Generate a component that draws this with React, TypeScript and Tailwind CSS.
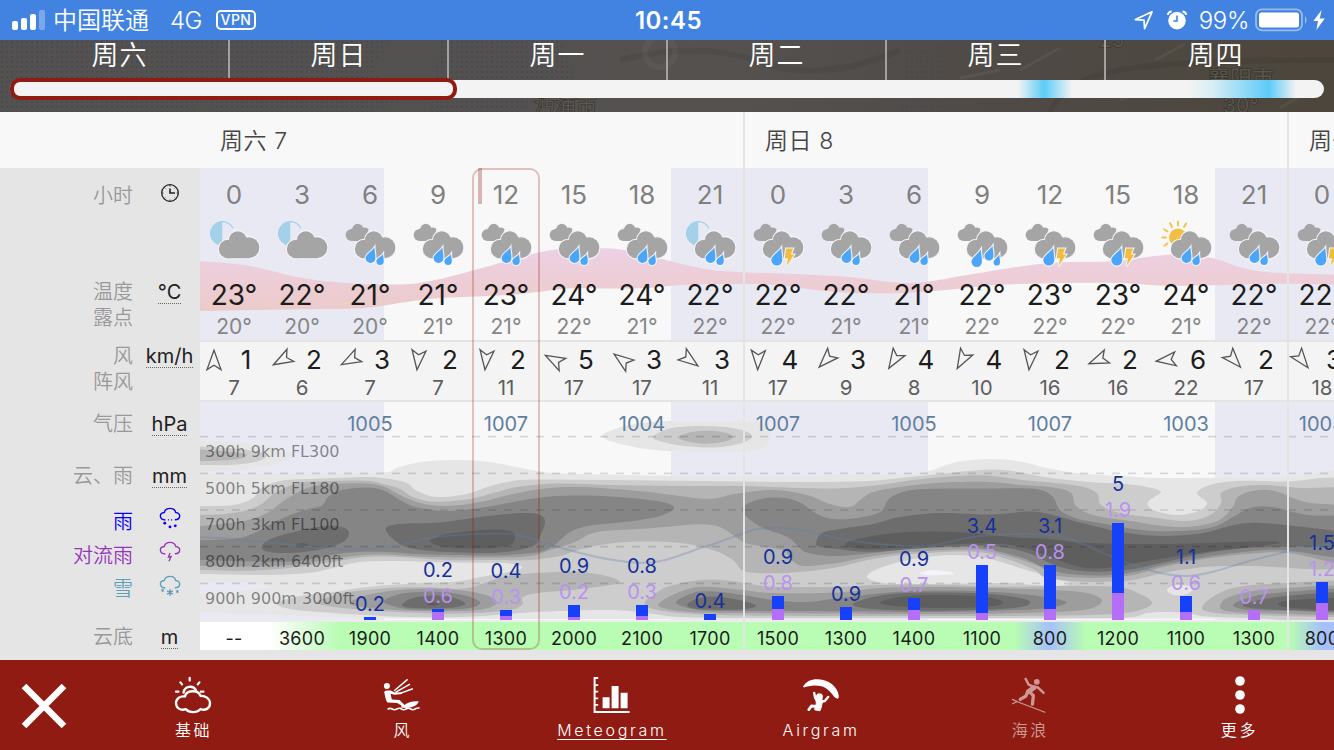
import React from "react";

type Pt = [number, number];

/* ---------- geometry helpers ---------- */

function parse(s: string): Pt[] {
  return s
    .trim()
    .split(/\s+/)
    .map((p) => p.split(",").map(Number) as Pt);
}

function segment(p0: Pt, p1: Pt, p2: Pt, p3: Pt): string {
  const c1x = p1[0] + (p2[0] - p0[0]) / 6;
  const c1y = p1[1] + (p2[1] - p0[1]) / 6;
  const c2x = p2[0] - (p3[0] - p1[0]) / 6;
  const c2y = p2[1] - (p3[1] - p1[1]) / 6;
  return `C${c1x.toFixed(1)},${c1y.toFixed(1)} ${c2x.toFixed(1)},${c2y.toFixed(1)} ${p2[0]},${p2[1]}`;
}

function openPath(s: string, move = true): string {
  const p = parse(s);
  let d = `${move ? "M" : "L"}${p[0][0]},${p[0][1]}`;
  for (let i = 0; i < p.length - 1; i++) {
    d += segment(p[Math.max(i - 1, 0)], p[i], p[i + 1], p[Math.min(i + 2, p.length - 1)]);
  }
  return d;
}

function closedPath(s: string): string {
  const p = parse(s);
  const n = p.length;
  let d = `M${p[0][0]},${p[0][1]}`;
  for (let i = 0; i < n; i++) {
    d += segment(p[(i - 1 + n) % n], p[i], p[(i + 1) % n], p[(i + 2) % n]);
  }
  return d + "Z";
}

/* ---------- forecast data ---------- */

type Sky = "moon" | "rain" | "moonRain" | "storm" | "heavy" | "sunRain";

interface Hour {
  h: number;
  sky: Sky;
  t: number;
  dew: number;
  dir: number;
  wind: number;
  gust: number;
  hpa?: number;
  rain?: string;
  conv?: string;
  rainPx: number;
  convPx: number;
  base: string;
}

const HOURS: Hour[] = [
  { h: 0, sky: "moon", t: 23, dew: 20, dir: 0, wind: 1, gust: 7, rainPx: 0, convPx: 0, base: "--" },
  { h: 3, sky: "moon", t: 22, dew: 20, dir: 241, wind: 2, gust: 6, rainPx: 0, convPx: 0, base: "3600" },
  { h: 6, sky: "rain", t: 21, dew: 20, dir: 242, wind: 3, gust: 7, hpa: 1005, rain: "0.2", rainPx: 3, convPx: 0, base: "1900" },
  { h: 9, sky: "rain", t: 21, dew: 21, dir: 186, wind: 2, gust: 7, rain: "0.2", conv: "0.6", rainPx: 3, convPx: 8, base: "1400" },
  { h: 12, sky: "rain", t: 23, dew: 21, dir: 186, wind: 2, gust: 11, hpa: 1007, rain: "0.4", conv: "0.3", rainPx: 6, convPx: 4, base: "1300" },
  { h: 15, sky: "rain", t: 24, dew: 22, dir: 298, wind: 5, gust: 17, rain: "0.9", conv: "0.2", rainPx: 12, convPx: 3, base: "2000" },
  { h: 18, sky: "rain", t: 24, dew: 21, dir: 306, wind: 3, gust: 17, hpa: 1004, rain: "0.8", conv: "0.3", rainPx: 11, convPx: 4, base: "2100" },
  { h: 21, sky: "moonRain", t: 22, dew: 22, dir: 126, wind: 3, gust: 11, rain: "0.4", rainPx: 6, convPx: 0, base: "1700" },
  { h: 0, sky: "storm", t: 22, dew: 22, dir: 182, wind: 4, gust: 17, hpa: 1007, rain: "0.9", conv: "0.8", rainPx: 13, convPx: 11, base: "1500" },
  { h: 3, sky: "rain", t: 22, dew: 21, dir: 224, wind: 3, gust: 9, rain: "0.9", rainPx: 13, convPx: 0, base: "1300" },
  { h: 6, sky: "rain", t: 21, dew: 21, dir: 212, wind: 4, gust: 8, hpa: 1005, rain: "0.9", conv: "0.7", rainPx: 12, convPx: 10, base: "1400" },
  { h: 9, sky: "heavy", t: 22, dew: 22, dir: 209, wind: 4, gust: 10, rain: "3.4", conv: "0.5", rainPx: 48, convPx: 7, base: "1100" },
  { h: 12, sky: "storm", t: 23, dew: 22, dir: 186, wind: 2, gust: 16, hpa: 1007, rain: "3.1", conv: "0.8", rainPx: 44, convPx: 11, base: "800" },
  { h: 15, sky: "storm", t: 23, dew: 22, dir: 248, wind: 2, gust: 16, rain: "5", conv: "1.9", rainPx: 70, convPx: 27, base: "1200" },
  { h: 18, sky: "sunRain", t: 24, dew: 21, dir: 263, wind: 6, gust: 22, hpa: 1003, rain: "1.1", conv: "0.6", rainPx: 16, convPx: 8, base: "1100" },
  { h: 21, sky: "rain", t: 22, dew: 22, dir: 138, wind: 2, gust: 17, conv: "0.7", rainPx: 0, convPx: 10, base: "1300" },
  { h: 0, sky: "storm", t: 22, dew: 22, dir: 142, wind: 3, gust: 18, hpa: 1004, rain: "1.5", conv: "1.2", rainPx: 21, convPx: 17, base: "800" },
];

const TEMP_TOP =
  "200,261 247,265.5 300,277.5 347,283 400,284.5 433,280.5 473,270.5 507,261 540,252.3 570,248 607,248.3 633,251.7 670,261 707,269.3 743,272.3 778,273.3 846,276.7 891,282 922,282.3 967,275 1024,266 1062,262.3 1111,261.3 1157,255.7 1183,254.3 1213,258.3 1244,268.3 1270,272.3 1334,274.7";
const TEMP_BOTTOM =
  "1334,284.7 1270,283.7 1213,285.3 1164,285.7 1119,283 1062,283 998,285 937,290.7 899,293 854,293 816,290 785,285.7 743,284 683,285 640,288.3 573,288.3 540,291.7 507,295 437,298.3 400,303 360,308.3 300,309.3 200,311";

const PRESSURE =
  "196,537 233,539 283,544 333,548.7 367,549 400,545.3 430,537.5 480,534 513,534.3 540,541 567,549.5 607,559 643,562.7 667,559.5 693,550.7 720,541.7 743,533.5 757,529 780,528 807,531 840,538.5 880,544.3 927,545.7 973,537 1007,534.3 1040,534.3 1063,537 1087,546 1120,560 1160,573 1187,576 1213,571.7 1247,561.7 1287,551.7 1310,547 1340,543";

/* Cloud cover contours, lightest first; each shape is drawn over the former. */
const CLOUDS: { fill: string; shapes: string[] }[] = [
  {
    fill: "#e6e6e6",
    shapes: [
      "180,474 200,474 300,474 380,473 397,468 420,462 453,460 490,462 540,471.5 580,474 670,475.7 743,476.3 857,475 907,474 930,470.7 957,462 990,459 1020,461.5 1047,468 1077,473 1120,476 1160,478 1207,477.7 1287,476.5 1350,476 1360,550 1350,618.5 1200,618.5 1000,619 700,619 500,619 400,618.5 330,617 260,614 200,612 180,611 180,597 200,594 240,591 270,587 250,583 200,581 180,581 150,520",
      "170,441 200,440.5 240,443 275,448 292,455 275,464 240,470 200,471 170,471",
      "602,436.7 615,429 640,423 670,421 710,421.3 750,421 765,425 770,437 765,447 750,451.5 710,452 660,450.5 625,445",
    ],
  },
  {
    fill: "#cdcdcd",
    shapes: [
      "180,506 200,506 233,505 253,498 263,487 283,480.5 317,478.7 367,477 390,479 407,483 417,491 437,497 467,494 487,487 507,482 533,479.5 613,480 743,481.5 807,482 867,481 900,478 940,474 973,470.5 995,469.5 1017,471.7 1047,477.5 1087,481.7 1125,484 1147,487 1161,492 1148,501.7 1153,510 1177,515 1198,511 1207,503 1197,493 1210,485 1237,481 1287,481.5 1350,483 1360,550 1350,617.5 1253,618 1207,616.5 1187,613 1165,612 1147,613 1120,618 1000,618 743,618 680,617 647,613 613,610 560,611 520,613 463,617 400,616.7 333,613 290,609 277,603 300,596 333,592 367,587 413,583.5 457,581.5 480,577 513,571 522,567 510,563.5 493,562.7 447,562.5 400,561 360,562 333,568 310,572.7 267,575 200,574 180,574 150,540",
      "170,446.5 205,446.7 240,449 262,453 266,457 255,462 230,465 200,465 170,465",
      "653,437 668,429 695,426 725,427 745,431 752,437 740,443.5 715,447.5 685,446 663,442",
    ],
  },
  {
    fill: "#e6e6e6",
    shapes: [
      "867,577 880,568 913,559 953,555 990,559 1023,569 1045,575.5 1060,580 1072,583 1057,586 1035,585 1007,583 973,583.5 913,584 883,583",
      "1167,590 1174,585.5 1187,585.5 1193,589 1186,594.5 1174,595",
    ],
  },
  { fill: "#f3f3f8", shapes: ["920,573 932,570 948,571.5 954,574 940,575 926,575"] },
  {
    fill: "#b5b5b5",
    shapes: [
      "180,515 200,515 233,513 258,506 277,491.7 300,483 330,481 367,480.7 385,484.5 400,489 413,497 433,501.7 467,499.5 493,493 520,486.5 560,483.5 613,485 680,486 743,486 800,488 840,488.3 880,485 913,480 957,476 990,475.7 1023,480 1053,482.7 1082,486.5 1097,493 1101,505 1120,513 1153,517.5 1187,521 1210,515 1221,503 1221,493 1237,487 1265,485 1300,488 1350,491 1360,530 1350,567 1253,566 1207,566.7 1163,573 1130,580.5 1087,581.7 1047,578 1035,570 1007,559 973,551.7 913,554 873,559 833,568 790,572.7 757,573 742,570 733,560 713,550 680,543 633,541.7 600,545 575,551 560,556 530,560 493,560 447,560 400,557 367,557 333,561.7 300,566.7 250,570.7 200,570 180,570 150,540",
      "170,450 205,450 232,452 247,455 235,459.5 205,461 170,461",
      "678,437 692,432 710,430.7 727,433 733,437 725,441.5 705,443.7 688,441.5",
      "317,602 343,593 377,589 400,587.5 430,587.5 465,588.5 490,581 507,576 540,572.7 580,572 610,577 619,582.7 597,587 567,590.5 540,592.7 523,597 522,605 507,610.5 463,613.5 413,612.7 367,610 333,606.7",
      "645,602 655,594 667,587 693,581 720,580 743,582.7 773,586.7 840,586.7 880,585 940,585 1007,586.7 1070,586 1117,587 1138,593 1152,603 1133,611.7 1087,615 1000,616 900,616 740,615.5 680,613 650,608",
      "1202,608 1213,596.7 1237,587 1287,583 1350,582 1360,600 1350,616 1253,615 1215,613",
    ],
  },
  {
    fill: "#9d9d9d",
    shapes: [
      "180,526 200,526 243,521 267,513 285,500 307,488 335,484 367,483.5 385,487 400,495 420,503 447,506 480,502 513,494 545,488.5 580,487 613,489 647,491.7 680,496 710,499 735,494 773,490 807,495 830,504 850,507 860,500 873,492 900,487 940,482.7 990,482 1020,485 1053,487.5 1071,493 1076,506 1093,515 1130,521 1177,527 1215,522 1232,508 1238,496.7 1255,490.5 1275,491 1305,502 1350,509 1360,540 1350,564 1290,553 1253,553.5 1207,558.5 1163,567 1130,575.5 1093,578 1053,575 1040,566.7 1007,555.5 973,549.5 913,551.7 873,556 840,562.5 807,566 795,563 788,555 783,550 760,546 743,541.7 723,528.5 707,524.5 680,525.5 647,528.5 610,530.5 590,534 575,542 550,550 530,556 493,557.5 430,557 380,554.5 350,556.5 320,561 290,565 250,566.5 200,565.7 180,565 150,540",
      "350,604 360,597 380,592.5 405,589.5 440,589 473,592 493,598 495,605 473,610.5 413,610.7 370,608",
      "660,607 665,599 690,588.5 713,587 743,590 773,593 840,592.5 880,588 940,587 1007,588.5 1053,590 1087,593 1102,601 1083,610 1020,613 940,614 740,613 690,612",
      "1220,606.7 1227,598 1253,591 1287,588 1350,586 1360,600 1350,614 1253,613 1227,611",
    ],
  },
  {
    fill: "#858585",
    shapes: [
      "180,540 200,540 233,539 253,533.5 283,518 305,510 322,505.5 328,497 342,490 367,487.5 385,491 400,500 417,507.5 447,511 480,508 513,502 547,496.7 580,495.5 610,496.5 645,499.5 668,503.5 674,509 660,516 640,520 610,523.5 587,526 570,532 557,543 543,551 520,554 493,555.5 430,554.5 380,551.7 345,553 318,558 290,561.5 250,561.5 200,560 180,560 150,550",
      "742,508 757,500 777,497.5 798,501.5 817,514 833,519 857,518 880,512 888,500 900,493 923,489 990,488.5 1035,489 1052,496 1060,510 1075,518 1100,523 1153,531 1207,528.5 1233,517 1250,508 1273,507 1307,515 1350,518 1360,540 1350,558 1287,550.5 1253,551 1207,556.7 1163,565 1130,572.7 1093,575.5 1053,571 1020,557 973,547.5 913,548.5 873,553 833,556 807,552.5 797,545 787,536.7 763,528 747,517",
      "384,602 400,594 433,591.5 463,595 480,602 470,608 440,609.5 407,609",
      "676,603 693,593 713,591.5 743,595 773,600 807,602 835,598.5 865,595 895,592 940,590.5 990,591.7 1035,595.5 1066,601.7 1053,607 1020,610 940,612 840,611.3 740,611 700,610",
      "1233,605 1253,596.5 1287,592 1350,589 1360,600 1350,612 1290,611 1250,610",
    ],
  },
  {
    fill: "#6d6d6d",
    shapes: [
      "262,546 273,538 300,530.5 325,526 343,527.5 349,533 343,542 320,549.5 290,553 267,551.5",
      "386,528 400,524 440,522.5 480,517 513,513.5 537,514 545,520.7 541,534 533,546 500,552.5 447,552 410,548 393,539",
      "816,543 822,533 840,529 873,524 900,517 940,513 990,514.5 1030,511.5 1053,515 1080,522.5 1120,531.7 1160,536 1200,533.5 1227,526.7 1247,523 1275,524 1350,533 1360,540 1350,547 1287,546.7 1247,548 1207,553 1163,562.5 1130,569.5 1093,571.7 1060,567 1025,552 990,546 940,547 873,551.7 837,549 820,547",
      "402,605 413,598 437,595.5 457,599 465,604.5 447,608 413,608",
      "687,605 700,598 720,597 743,601 756,606 740,609.5 700,609.3",
      "853,605 873,597 907,593 973,593 1013,596.7 1030,602 1013,608 940,610.7 880,609.5",
      "1243,605 1260,600 1287,596 1350,592 1360,600 1350,611 1290,610 1255,608.5",
    ],
  },
  {
    fill: "#5e5e5e",
    shapes: [
      "295,545 302,543 309,545 302,547",
      "430,541 436,537.5 450,533.5 490,529.5 510,531 515,537.5 507,546 470,548.5 440,546",
      "845,544 855,539.5 890,533.5 927,531.5 973,533 1010,537 1047,539 1090,543 1153,544 1210,543 1253,541.5 1280,542.5 1253,546.7 1207,551.7 1153,560 1110,567.5 1080,567 1045,555 1015,545.5 973,543.5 923,546.7 873,549 850,547.5",
      "427,604 433,602.5 439,604 433,605.5",
      "880,602.7 900,597 940,595 987,597 1003,602.7 987,606.7 940,608 900,606.5",
      "1278,604 1293,600 1350,597.5 1360,603 1350,610 1293,608",
    ],
  },
];

/* ---------- icons ---------- */

const HALO = "#f4f4f8";

function Cloud() {
  const shape = (
    <>
      <circle cx="18.5" cy="28.5" r="9.2" />
      <circle cx="28.3" cy="19.5" r="8.8" />
      <circle cx="39.3" cy="27.2" r="10.5" />
      <rect x="18.5" y="22" width="21" height="15.7" />
    </>
  );
  return (
    <>
      <g fill={HALO} stroke={HALO} strokeWidth="2.2">
        {shape}
      </g>
      <g fill="#a5a5a5">{shape}</g>
    </>
  );
}

function Drop({ x, top, w, h }: { x: number; top: number; w: number; h: number }) {
  const r = w / 2;
  const cy = top + h - r;
  return (
    <path
      d={`M${x + r * 0.8},${top} C${x + r * 0.3},${top + h * 0.25} ${x - r},${cy - r * 0.8} ${x - r},${cy} A${r},${r} 0 0 0 ${x + r},${cy} C${x + r},${cy - r} ${x + r * 0.8},${top + 3} ${x + r * 0.8},${top}Z`}
      fill="#4ba6fa"
      stroke={HALO}
      strokeWidth="2.2"
      paintOrder="stroke"
    />
  );
}

function SkyIcon({ sky }: { sky: Sky }) {
  const moon = sky === "moon" || sky === "moonRain";
  const sun = sky === "sunRain";
  return (
    <svg width="50" height="50" viewBox="-0.5 -0.5 50 50" className="block overflow-visible">
      {moon && (
        <g>
          <path d="M12.8,.6 A12.3,12.3 0 0 0 12.8,25.2Z" fill="#a3d1ea" />
          <path d="M12.5,1.1 C17,.6 21.5,3.5 23.5,7.8" fill="none" stroke="#a3d1ea" strokeWidth="1.2" />
        </g>
      )}
      {sun && (
        <g>
          <circle cx="16.5" cy="17" r="9" fill="#f1bf42" />
          <g stroke="#f1c14a" strokeWidth="1.9" strokeLinecap="round">
            <path d="M16.5,5V1M10.5,6.5L8.5,2.6M6,11L2.5,8.8M4.3,17H.8M6,23L3,25.3M22.5,6.5L24.6,3" />
          </g>
        </g>
      )}
      {!moon && !sun && (
        <g fill="#a5a5a5">
          <circle cx="6.2" cy="14.5" r="6.1" />
          <circle cx="12.3" cy="8.9" r="5.6" />
          <path d="M6,8 L17,7.2 Q21,6.2 23,8.5 L20,20.6 L6,20.6Z" />
        </g>
      )}
      <Cloud />
      {(sky === "rain" || sky === "moonRain" || sky === "sunRain") && (
        <>
          <Drop x={25} top={27} w={9.8} h={15.4} />
          <Drop x={34.6} top={33.5} w={7.4} h={11} />
        </>
      )}
      {sky === "heavy" && (
        <>
          <Drop x={31.5} top={25.5} w={9} h={14.5} />
          <Drop x={19.2} top={29} w={10.4} h={17.4} />
          <Drop x={39.3} top={34} w={6.4} h={11} />
        </>
      )}
      {sky === "storm" && (
        <>
          <Drop x={23.3} top={27.5} w={11} h={17.6} />
          <path
            d="M32.6,28 H39.6 L37.3,34 H40.6 L33,45.8 L34.6,37.8 H31.3Z"
            fill="#f3bc3c"
            stroke={HALO}
            strokeWidth="2.2"
            paintOrder="stroke"
          />
        </>
      )}
    </svg>
  );
}

function WindArrow({ dir }: { dir: number }) {
  return (
    <svg width="22" height="24" viewBox="-11 -12 22 24" className="block overflow-visible">
      <path
        d="M0,-9.8 L7,9.6 L0,5.2 L-7,9.6Z"
        transform={`rotate(${dir})`}
        fill="none"
        stroke="#555"
        strokeWidth="1.3"
      />
    </svg>
  );
}

const CLOUD_OUTLINE = "M5.6,12.4 C-.6,12.2 -.6,5.6 4.6,5.2 C5.6,0 14.4,0 15.4,5.2 C20.6,5.4 20.8,12 14.6,12.2";

function RainSmall() {
  return (
    <svg width="22" height="22" viewBox="-.5 0 21 21" fill="none" stroke="#0a00f0" strokeWidth="1.3">
      <path d={CLOUD_OUTLINE} />
      <path d="M8,12.3h1M11,12.3h1" />
      <g fill="#0a00f0" stroke="none">
        <circle cx="5" cy="15.4" r="1.4" />
        <circle cx="10" cy="19" r="1.4" />
        <circle cx="15" cy="18" r="1.4" />
      </g>
    </svg>
  );
}

function StormSmall() {
  return (
    <svg width="22" height="22" viewBox="-.5 0 21 21" fill="none" stroke="#9636b8" strokeWidth="1.3">
      <path d={CLOUD_OUTLINE} />
      <path d="M10,11.5 L8.6,15.4 L11,14.8 L9,19.3" />
    </svg>
  );
}

function SnowSmall() {
  return (
    <svg width="22" height="22" viewBox="-.5 0 21 21" fill="none" stroke="#5f9fb8" strokeWidth="1.3">
      <path d={CLOUD_OUTLINE} />
      <path d="M10,13.6v6.2M7.3,15.2l5.4,3.1M12.7,15.2l-5.4,3.1" strokeWidth="1.4" />
      <path d="M3,13v3.2M1.6,13.8l2.8,1.6M4.4,13.8l-2.8,1.6M17,14.2v3.2M15.6,15l2.8,1.6M18.4,15l-2.8,1.6" strokeWidth=".9" />
    </svg>
  );
}

function ClockSmall() {
  return (
    <svg width="20" height="20" viewBox="0 0 20 20" fill="none" stroke="#222">
      <circle cx="10" cy="10" r="8.3" strokeWidth="1.3" />
      <path d="M10,5.5V10H15" strokeWidth="1.6" />
      <path d="M10,2v1.4M10,16.6V18M2,10h1.4M16.6,10H18M4.4,4.4l1,1M14.6,14.6l1,1M4.4,15.6l1,-1M14.6,5.4l1,-1" strokeWidth=".8" />
    </svg>
  );
}

/* ---------- status bar ---------- */

function StatusBar() {
  return (
    <header className="flex h-10 shrink-0 items-center bg-[#4283e1] text-white">
      <div className="flex flex-1 items-center pl-3">
        <div className="flex h-5 items-end gap-[3px]">
          <i className="block h-[9px] w-[6px] rounded-[2px] bg-white" />
          <i className="block h-[12px] w-[6px] rounded-[2px] bg-white" />
          <i className="block h-[16px] w-[6px] rounded-[2px] bg-white" />
          <i className="block h-5 w-[6px] rounded-[2px] bg-white/30" />
        </div>
        <span className="ml-[8px] pt-[2px] text-[24px] leading-10 font-[350]">中国联通</span>
        <span className="ml-[21px] pt-[2px] text-[24px] leading-10 font-[350] tracking-[-0.5px]">4G</span>
        <span className="ml-[14px] flex h-5 w-10 items-center justify-center rounded-[5px] border-2 border-white text-[14px] leading-none font-medium tracking-[0.5px]">
          VPN
        </span>
      </div>
      <div className="w-[80px] pt-[2px] text-center text-[24px] leading-10 font-semibold tracking-[0.5px]">10:45</div>
      <div className="flex flex-1 items-center justify-end pr-[9px]">
        <svg width="20" height="20" viewBox="0 0 20 20" fill="none" stroke="#fff" strokeWidth="1.7" strokeLinejoin="round">
          <path d="M18,1.8 L1.4,9.6 L10,10.2 L10.6,18.6Z" />
        </svg>
        <svg width="22" height="20" viewBox="0 0 22 20" className="ml-[12px]">
          <circle cx="11" cy="10.6" r="8.8" fill="#fff" />
          <path d="M11,5.5V11H7.3" fill="none" stroke="#4283e1" strokeWidth="1.6" />
          <path d="M1.8,4.8 A4,4 0 0 1 5.6,1.4M20.2,4.8 A4,4 0 0 0 16.4,1.4" fill="none" stroke="#fff" strokeWidth="2" />
        </svg>
        <span className="ml-[11px] pt-[2px] text-[24px] leading-10 font-[350] tracking-[-0.4px]">99%</span>
        <svg width="54" height="24" viewBox="0 0 54 24" className="ml-[6px]">
          <rect x="1" y="1.4" width="46" height="21" rx="6" fill="none" stroke="#fff" strokeOpacity=".45" strokeWidth="1.8" />
          <rect x="4" y="4.6" width="40" height="14.8" rx="2.5" fill="#fff" />
          <path d="M50,8 Q53,12 50,16Z" fill="#fff" fillOpacity=".5" />
        </svg>
        <svg width="12" height="20" viewBox="0 0 12 20" className="ml-[4px]">
          <path d="M8.6,0 L.4,11 H5 L3.4,20 L11.8,8.4 H6.8Z" fill="#fff" />
        </svg>
      </div>
    </header>
  );
}

/* ---------- week timeline ---------- */

const WEEK = ["周六", "周日", "周一", "周二", "周三", "周四"];

function MapBackdrop() {
  return (
    <svg className="absolute inset-0" width="1334" height="72" viewBox="0 40 1334 72">
      <defs>
        <linearGradient id="land" x1="0" x2="1" y1="0" y2="0">
          <stop offset="0" stopColor="#535251" />
          <stop offset=".55" stopColor="#54514f" />
          <stop offset=".75" stopColor="#4f4a46" />
          <stop offset="1" stopColor="#4c463c" />
        </linearGradient>
        <pattern id="dots" width="5" height="5" patternUnits="userSpaceOnUse">
          <rect x="1" y="1" width="2" height="2" fill="#484850" />
        </pattern>
      </defs>
      <rect y="40" width="1334" height="72" fill="url(#land)" />
      <path d="M0,40H390L372,70L405,100L370,112H215L205,100L190,112H0Z M440,40H560L575,75L520,112H430Z M905,50L950,44L945,112H900Z" fill="url(#dots)" opacity=".75" />
      <g fill="none" stroke="#000" strokeOpacity=".06" strokeWidth="6">
        <path d="M620,60 Q700,40 760,62 T900,50M1050,112 Q1065,80 1120,70 T1334,60" />
      </g>
      <circle cx="660" cy="52" r="15" fill="none" stroke="#fff" strokeOpacity=".04" strokeWidth="6" />
      <g fill="none" stroke="#fff" strokeOpacity=".05" strokeWidth="3">
        <path d="M1020,70l40,-22M1120,100l40,-14M1155,60l30,-16M1280,108l40,-24M960,78l40,-8" />
      </g>
      <g fontSize="21" fill="#5d5850" stroke="#2f2c27" strokeWidth="1.2" paintOrder="stroke" opacity=".85">
        <text x="1099" y="47">25°</text>
        <text x="1208" y="86" fontSize="22">襄阳市</text>
        <text x="1223" y="113">30°</text>
        <text x="534" y="112">沔浦市</text>
      </g>
    </svg>
  );
}

function Timeline() {
  return (
    <section className="relative h-[72px] shrink-0 overflow-hidden">
      <MapBackdrop />
      <div className="relative flex h-10 pl-[11px]">
        {WEEK.map((d, i) => (
          <div
            key={d}
            className={`h-10 w-[219px] shrink-0 pt-px text-center text-[27px] leading-[30px] font-[350] tracking-[1px] text-white ${
              i < 5 ? "border-r-2 border-[#a3a2a1]" : ""
            }`}
          >
            {d}
          </div>
        ))}
      </div>
      <div className="relative mx-[10px] flex h-[18px] overflow-hidden rounded-full bg-[#f3f3f3]">
        <div className="ml-[1008px] h-full w-[54px] bg-[linear-gradient(90deg,#f3f3f3,#5ccbf9_48%,#f3f3f3)]" />
        <div className="ml-[116px] h-full w-[108px] bg-[linear-gradient(90deg,#f3f3f3,#d9eef5_22%,#5ccbf9_75%,#f3f3f3)]" />
      </div>
      <div className="absolute top-[38px] left-[10px] h-[22px] w-[447px] rounded-[10px] border-4 border-[#8f1b12]" />
    </section>
  );
}

/* ---------- left legend ---------- */

function Legend({
  label,
  unit,
  className = "",
  labelClass = "text-[#999]",
  dotted = false,
}: {
  label: string;
  unit?: React.ReactNode;
  className?: string;
  labelClass?: string;
  dotted?: boolean;
}) {
  return (
    <div className={`flex h-[26px] items-center ${className}`}>
      <span className={`w-[133px] text-right text-[20px] leading-[26px] font-[350] ${labelClass}`}>{label}</span>
      <span className="ml-[7px] flex w-[59px] justify-center text-[20px] leading-[22px] text-[#222]">
        {dotted ? <span className="border-b border-dotted border-[#666] leading-[22px]">{unit}</span> : unit}
      </span>
    </div>
  );
}

function Sidebar() {
  return (
    <aside className="w-[200px] shrink-0 bg-[#e5e5e5]">
      <Legend label="小时" className="mt-[15px]" unit={<span className="-mt-[7px]"><ClockSmall /></span>} />
      <Legend label="温度" className="mt-[70px]" unit="°C" dotted />
      <Legend label="露点" />
      <Legend label="风" className="mt-[12px]" unit="km/h" dotted />
      <Legend label="阵风" />
      <Legend label="气压" className="mt-[16px]" unit="hPa" dotted />
      <Legend label="云、雨" className="mt-[26px]" unit="mm" dotted />
      <Legend label="雨" className="mt-[20px]" labelClass="text-[#0a00f0]" unit={<span className="-mt-[8px]"><RainSmall /></span>} />
      <Legend label="对流雨" className="mt-[8px]" labelClass="text-[#9636b8]" unit={<span className="-mt-[8px]"><StormSmall /></span>} />
      <Legend label="雪" className="mt-[7px]" labelClass="text-[#5f9fb8]" unit={<span className="-mt-[7px]"><SnowSmall /></span>} />
      <Legend label="云底" className="mt-[22px]" unit="m" dotted />
    </aside>
  );
}

/* ---------- meteogram ---------- */

const NIGHTS: Pt[] = [
  [200, 384],
  [671, 928],
  [1215, 1334],
];

function Nights({ y, h }: { y: number; h: number }) {
  return (
    <>
      {NIGHTS.map(([a, b]) => (
        <rect key={a} x={a} y={y} width={b - a} height={h} fill="#e9e9f4" />
      ))}
    </>
  );
}

function TempBand() {
  return (
    <svg className="absolute inset-0" width="1134" height="172" viewBox="200 168 1134 172">
      <defs>
        <linearGradient id="warm" x1="0" x2="0" y1="248" y2="311" gradientUnits="userSpaceOnUse">
          <stop offset="0" stopColor="#ecd0e4" />
          <stop offset=".45" stopColor="#edced8" />
          <stop offset="1" stopColor="#ebcbc9" />
        </linearGradient>
      </defs>
      <Nights y={168} h={172} />
      <path d={`${openPath(TEMP_TOP)}${openPath(TEMP_BOTTOM, false)}Z`} fill="url(#warm)" />
    </svg>
  );
}

function CloudChart() {
  return (
    <svg className="absolute inset-0" width="1134" height="218" viewBox="200 402 1134 218">
      <Nights y={402} h={218} />
      {CLOUDS.map((level, i) => (
        <g key={i} fill={level.fill}>
          {level.shapes.map((s) => (
            <path key={s} d={closedPath(s)} />
          ))}
        </g>
      ))}
      <g stroke="#000" strokeOpacity=".13" strokeWidth="1.7" strokeDasharray="8 8">
        {[436.7, 473.3, 510, 546.7, 583.3].map((y) => (
          <path key={y} d={`M200,${y}H1334`} />
        ))}
      </g>
      <path d={openPath(PRESSURE)} fill="none" stroke="#5f80ab" strokeOpacity=".32" strokeWidth="2" />
    </svg>
  );
}

const ALTITUDES = ["300h 9km FL300", "500h 5km FL180", "700h 3km FL100", "800h 2km 6400ft", "900h 900m 3000ft"];

const ROW = "grid grid-cols-[repeat(17,68px)] justify-items-center";

function Meteogram() {
  return (
    <div className="relative flex w-[1134px] flex-col overflow-hidden bg-[#f8f8f8]">
      <section className="relative h-[172px] shrink-0">
        <TempBand />
        <div className={`relative ${ROW} h-[52px] text-[26px] leading-[54px] text-[#808080]`}>
          {HOURS.map((c, i) => (
            <span key={i}>{c.h}</span>
          ))}
        </div>
        <div className={`relative ${ROW} h-[54px]`}>
          {HOURS.map((c, i) => (
            <SkyIcon key={i} sky={c.sky} />
          ))}
        </div>
        <div className={`relative ${ROW} h-[36px] text-[28px] leading-[42px] text-[#1c1c1c]`}>
          {HOURS.map((c, i) => (
            <span key={i}>{c.t}°</span>
          ))}
        </div>
        <div className={`relative ${ROW} h-[30px] text-[21px] leading-[34px] text-[#868686]`}>
          {HOURS.map((c, i) => (
            <span key={i}>{c.dew}°</span>
          ))}
        </div>
      </section>

      <section className="h-[62px] shrink-0 border-y-2 border-[#e4e4e4] bg-[#f4f4f4]">
        <div className="grid grid-cols-[repeat(17,68px)] text-[26px] leading-[36px] text-[#1c1c1c]">
          {HOURS.map((c, i) => (
            <div key={i} className="flex h-[34px] items-center gap-[11px] pt-[2px] pl-[3px]">
              <WindArrow dir={c.dir} />
              <span className="w-5 text-center">{c.wind}</span>
            </div>
          ))}
        </div>
        <div className={`${ROW} text-[20.5px] leading-[23px] text-[#5e5e5e]`}>
          {HOURS.map((c, i) => (
            <span key={i}>{c.gust}</span>
          ))}
        </div>
      </section>

      <section className="relative h-[218px] shrink-0">
        <CloudChart />
        <div className="absolute top-[32px] left-[5px] flex flex-col gap-[0.7px] font-['DejaVu_Sans'] text-[16px] leading-[36px] text-black/45">
          {ALTITUDES.map((a) => (
            <span key={a}>{a}</span>
          ))}
        </div>
        <div className={`relative ${ROW} h-[44px] text-[20px] leading-[45px] text-[#607e9f]`}>
          {HOURS.map((c, i) => (
            <span key={i}>{c.hpa ?? ""}</span>
          ))}
        </div>
        <div className={`relative ${ROW} h-[174px] items-end text-[20px] leading-[26px]`}>
          {HOURS.map((c, i) => (
            <div key={i} className="flex flex-col items-center">
              {c.rain && <span className="text-[#16309c]">{c.rain}</span>}
              {c.conv && <span className="text-[#b992ee]">{c.conv}</span>}
              <i className="block w-3 bg-[#1740fa]" style={{ height: c.rainPx }} />
              <i className="block w-3 bg-[#b36ff8]" style={{ height: c.convPx }} />
            </div>
          ))}
        </div>
      </section>

      <section
        className={`${ROW} h-[30px] shrink-0 border-t-2 border-[#ececec] bg-[linear-gradient(90deg,#fff_70px,#b9fcb4_140px,#b9fcb4_815px,#a6c0fa_850px,#b9fcb4_885px,#b9fcb4_1090px,#a6c0fa_1122px)] text-[18px] leading-[33px] tracking-[0.3px] text-[#1c1c1c]`}
      >
        {HOURS.map((c, i) => (
          <span key={i}>{c.base}</span>
        ))}
      </section>
      <div className="h-[10px] shrink-0 bg-[#e5e5e5]" />

      <div className="absolute top-0 left-[543px] h-[482px] w-[2px] bg-[#e4e4e4]" />
      <div className="absolute top-0 left-[1087px] h-[482px] w-[2px] bg-[#e4e4e4]" />
      <div className="absolute top-0 left-[272px] h-[482px] w-[68px] rounded-[10px] border-2 border-[#8f1b12]/25" />
      <div className="absolute top-0 left-[278px] h-9 w-1 bg-[#8f1b12]/30" />
    </div>
  );
}

/* ---------- bottom navigation ---------- */

const icon = { width: 36, height: 36, viewBox: "0 0 36 36", className: "block overflow-visible" };

function SunCloudIcon() {
  return (
    <svg {...icon} fill="none" stroke="#fff" strokeWidth="2.3" strokeLinecap="round" strokeLinejoin="round">
      <path d="M8.5,15.5 A6.8,6.8 0 0 1 21,13" />
      <path d="M14.7,1V3.6M5.4,5.4L7,7.4M24.4,5.4L22.8,7.4M1,14.7H3.4M25.8,14.7H28.4" />
      <path d="M10,19.5 C11,13 23.5,12.2 25.5,19 C30,18.4 35,21.5 35,26.5 C35,31.5 30,34 25.5,32 C22.5,36 14,36 11,32.2 C5.5,34 1,31 1,26 C1,21.5 5.5,18.5 10,19.5Z" />
    </svg>
  );
}

function KiteIcon() {
  return (
    <svg {...icon} fill="#fff">
      <circle cx="2.9" cy="9" r="3" />
      <path d="M.2,15.2 Q.6,13.4 3,13.6 L6.8,13.4 L10.8,15.4 L18,15.2 V17 L10.5,17.8 L6.6,16.8 L7.8,22.6 L15.5,23 L20.6,28 C23,25.8 27,24.2 34.6,24.2 C34.4,27.4 29.5,30.6 22.5,31 L16.5,30.4 L17.8,28.8 L13.2,26 L3.6,25.4 C2.4,25 1.2,20 .2,15.2Z" />
      <g fill="none" stroke="#fff" strokeWidth="1.5">
        <path d="M10.2,13.8 L23.6,2.4M11.4,15.4 L26,7.2M15.4,16.6 L28.8,11.8" />
        <path d="M3.6,32.4 Q6,30.6 8.2,32 T12.8,32 T17.4,32 T22,32 T26.6,32 T31,32 T35.6,31" />
      </g>
    </svg>
  );
}

function ChartIcon() {
  return (
    <svg {...icon} fill="#fff">
      <path d="M.6,0H5.2V2H2.6V7.2H5.2V9H2.6V13.8H5.2V15.6H2.6V20.4H5.2V22.2H2.6V27H5.2V28.8H2.6V34H36.6V36H.6Z" />
      <path d="M9.6,20.3H16.6V31.3H9.6ZM18.6,9H25.6V31.3H18.6ZM27.6,15.7H34.6V31.3H27.6Z" />
    </svg>
  );
}

function ParagliderIcon() {
  return (
    <svg {...icon} viewBox="-0.8 0 36 36" fill="#fff">
      <path d="M.2,9.8 C3,4.2 9,1.8 15.5,2.2 C26,2.6 35,9.5 36,19 C36.2,22 34.2,22.2 32.6,20.8 C29,17.5 25.5,10.6 17.5,9 C11.5,7.6 4.5,9 1.2,10.6Z" />
      <circle cx="16.6" cy="19.8" r="3.5" />
      <path d="M13.5,21.5 L20,23 L18.5,30 L17.2,33.8 L11.8,32.8 L13.4,27Z" stroke="#fff" strokeLinejoin="round" />
      <path d="M11.4,16 L12.4,21 L14.4,24.4M25.4,20 L22,24 L18,24.8" fill="none" stroke="#fff" strokeWidth="2.4" strokeLinecap="round" strokeLinejoin="round" />
      <path d="M13.5,29.4 L8.6,29 L6,32.6" fill="none" stroke="#fff" strokeWidth="2.8" strokeLinecap="round" strokeLinejoin="round" />
    </svg>
  );
}

function SurferIcon() {
  return (
    <svg {...icon} fill="none" stroke="#fff" strokeLinecap="round" strokeLinejoin="round">
      <circle cx="25.8" cy="4.8" r="2.9" fill="#fff" stroke="none" />
      <path d="M14.6,1.8 L17.6,7.6 L22.4,9.6 L26.8,10.4 L32.6,15.8" strokeWidth="2.5" />
      <path d="M22.8,10.8 L17.6,14.6" strokeWidth="5" />
      <path d="M16.4,15 L15,19 L9.2,22.4M18,14.4 L22.4,18.6 L21.4,27.2" strokeWidth="3.3" />
      <path d="M1.4,22.4 L7,25 L34,35.2M1.6,26.8 L6.4,24.4" strokeWidth="1.2" />
    </svg>
  );
}

function MoreIcon() {
  return (
    <svg {...icon} fill="#fff">
      <circle cx="19" cy="4" r="4.8" />
      <circle cx="19" cy="18" r="4.8" />
      <circle cx="19" cy="32" r="4.8" />
    </svg>
  );
}

const NAV = [
  { label: "基础", Icon: SunCloudIcon },
  { label: "风", Icon: KiteIcon },
  { label: "Meteogram", Icon: ChartIcon, active: true },
  { label: "Airgram", Icon: ParagliderIcon },
  { label: "海浪", Icon: SurferIcon, dim: true },
  { label: "更多", Icon: MoreIcon },
];

function BottomNav() {
  return (
    <nav className="flex h-[90px] shrink-0 overflow-hidden bg-[#8f1b12] text-white">
      <button className="flex w-[88px] shrink-0 items-center justify-center pt-[2px]">
        <svg width="46" height="46" viewBox="0 0 46 46" stroke="#fff" strokeWidth="6.5">
          <path d="M3,3L43,43M43,3L3,43" />
        </svg>
      </button>
      {NAV.map(({ label, Icon, active, dim }) => (
        <button
          key={label}
          className={`flex w-[209.2px] shrink-0 flex-col items-center pt-[17px] ${dim ? "opacity-55" : ""}`}
        >
          <Icon />
          <span
            className={`mt-[6px] ml-[2px] text-[16px] leading-[22px] font-[350] tracking-[2.7px] ${
              active ? "underline decoration-1 underline-offset-[3px] [text-decoration-skip-ink:none]" : ""
            }`}
          >
            {label}
          </span>
        </button>
      ))}
    </nav>
  );
}

export default function App() {
  return (
    <div className="flex h-[750px] w-[1334px] flex-col overflow-hidden bg-[#e5e5e5] font-['Inter','Noto_Sans_CJK_SC',sans-serif]">
      <StatusBar />
      <Timeline />
      <div className="grid h-[56px] shrink-0 grid-cols-[201px_544px_544px_45px] bg-[#f8f8f8] text-[23px] leading-[58px] font-[350] tracking-[0.6px] text-[#444]">
        <span />
        <span className="border-r-2 border-[#e4e4e4] pl-[19px]">周六 7</span>
        <span className="border-r-2 border-[#e4e4e4] pl-[20px]">周日 8</span>
        <span className="overflow-hidden pl-[20px] whitespace-nowrap">周一 9</span>
      </div>
      <main className="flex h-[492px] shrink-0">
        <Sidebar />
        <Meteogram />
      </main>
      <BottomNav />
    </div>
  );
}
